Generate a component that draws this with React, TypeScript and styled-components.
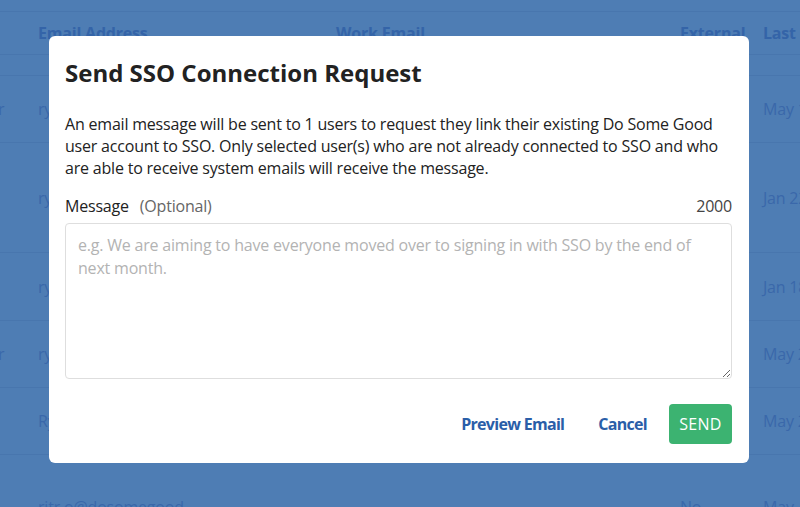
import React from "react";
import styled, { createGlobalStyle } from "styled-components";

const Global = createGlobalStyle`
  html, body { margin: 0; padding: 0; }
  body {
    width: 800px;
    height: 507px;
    overflow: hidden;
    background: #4e7db4;
    font-family: "Open Sans", "Noto Sans", sans-serif;
  }
  * { box-sizing: border-box; }
`;

const Page = styled.div`
  position: relative;
  width: 800px;
  height: 507px;
  overflow: hidden;
  background: #4e7db4;
`;

const TopBand = styled.div`
  height: 12px;
  border-bottom: 1px solid #4876ae;
`;

const Row = styled.div<{ $h: number }>`
  display: grid;
  grid-template-columns: 38px 298px 344px 83px 1fr;
  align-items: center;
  height: ${(p) => p.$h}px;
  border-bottom: 1px solid #4876ae;
  white-space: nowrap;
  overflow: hidden;
  letter-spacing: -0.2px;
`;

const HeadCell = styled.div`
  font-size: 16px;
  font-weight: 700;
  color: #3464a8;
`;

const Cell = styled.div`
  font-size: 16px;
  color: #3a68aa;
`;

const FirstCell = styled(Cell)`
  margin-left: -2px;
`;

const Overlay = styled.div`
  position: absolute;
  inset: 0;
  display: flex;
  align-items: flex-start;
  justify-content: flex-start;
  padding: 36px 0 0 49px;
`;

const Modal = styled.div`
  width: 700px;
  height: 427px;
  background: #fff;
  border-radius: 6px;
  padding: 22px 17px 19px 16px;
  display: flex;
  flex-direction: column;
  color: #222;
  letter-spacing: -0.2px;
`;

const Title = styled.h2`
  margin: 0;
  font-size: 24px;
  line-height: 30px;
  font-weight: 700;
  color: #222;
  letter-spacing: 0;
`;

const Body = styled.p`
  margin: 25px 0 0;
  font-size: 16px;
  line-height: 22px;
  color: #222;
`;

const LabelRow = styled.div`
  margin-top: 16px;
  display: flex;
  align-items: center;
  justify-content: space-between;
  font-size: 16px;
  line-height: 22px;
`;

const Label = styled.label`
  color: #222;
`;

const Optional = styled.span`
  color: #666;
  margin-left: 11px;
`;

const Counter = styled.span`
  color: #444;
`;

const TextArea = styled.textarea`
  margin-top: 6px;
  width: 100%;
  height: 156px;
  border: 1px solid #dedede;
  border-radius: 4px;
  padding: 10px 12px;
  font-family: inherit;
  font-size: 16px;
  line-height: 23px;
  letter-spacing: -0.2px;
  color: #222;
  resize: vertical;
  outline: none;
  &::placeholder {
    color: #b3b3b3;
  }
`;

const Actions = styled.div`
  margin-top: 25px;
  display: flex;
  justify-content: flex-end;
  align-items: center;
  gap: 34px;
`;

const LinkButton = styled.button`
  background: none;
  border: none;
  padding: 0;
  font-family: inherit;
  font-size: 16px;
  font-weight: 700;
  letter-spacing: -0.7px;
  color: #2a5ea8;
  cursor: pointer;
`;

const SendButton = styled.button`
  width: 63px;
  height: 40px;
  background: #3cb371;
  border: none;
  border-radius: 4px;
  color: #fff;
  font-family: inherit;
  font-size: 16px;
  letter-spacing: 0.3px;
  cursor: pointer;
  margin-left: -12px;
`;

const rows: { h: number; a: string; b: string; d: string; e: string }[] = [
  { h: 67, a: "r", b: "ry", d: "", e: "May 1" },
  { h: 110, a: "", b: "ry", d: "", e: "Jan 22" },
  { h: 68, a: "", b: "ry", d: "", e: "Jan 18" },
  { h: 67, a: "r", b: "ry", d: "", e: "May 2" },
  { h: 67, a: "", b: "Ry", d: "", e: "May 2" },
  { h: 104, a: "", b: "ritr.o@dosomegood", d: "No", e: "May" },
];

export default function App() {
  return (
    <>
      <Global />
      <Page>
        <TopBand />
        <Row $h={43}>
          <HeadCell />
          <HeadCell>Email Address</HeadCell>
          <HeadCell>Work Email</HeadCell>
          <HeadCell>External</HeadCell>
          <HeadCell>Last Sign In</HeadCell>
        </Row>
        <Row $h={21} />
        {rows.map((r, i) => (
          <Row key={i} $h={r.h}>
            <FirstCell>{r.a}</FirstCell>
            <Cell>{r.b}</Cell>
            <Cell />
            <Cell>{r.d}</Cell>
            <Cell>{r.e}</Cell>
          </Row>
        ))}
        <Overlay>
          <Modal role="dialog">
            <Title>Send SSO Connection Request</Title>
            <Body>
              An email message will be sent to 1 users to request they link their existing Do Some Good
              user account to SSO. Only selected user(s) who are not already connected to SSO and who
              are able to receive system emails will receive the message.
            </Body>
            <LabelRow>
              <Label>
                Message<Optional>(Optional)</Optional>
              </Label>
              <Counter>2000</Counter>
            </LabelRow>
            <TextArea placeholder="e.g. We are aiming to have everyone moved over to signing in with SSO by the end of next month." />
            <Actions>
              <LinkButton>Preview Email</LinkButton>
              <LinkButton>Cancel</LinkButton>
              <SendButton>SEND</SendButton>
            </Actions>
          </Modal>
        </Overlay>
      </Page>
    </>
  );
}
